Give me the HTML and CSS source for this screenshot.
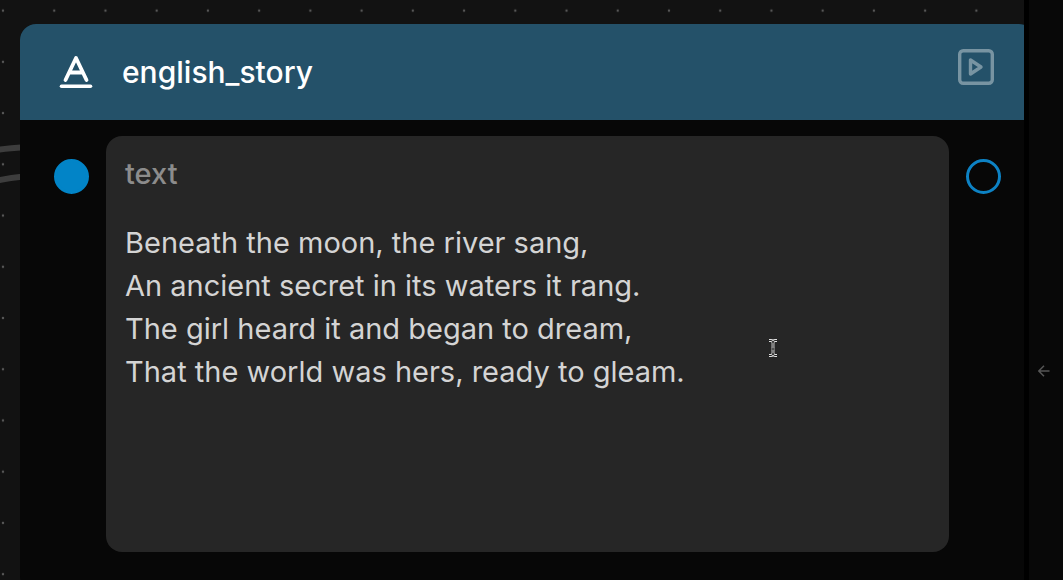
FILE: index.html
```html
<!DOCTYPE html>
<html lang="en">
<head>
<meta charset="utf-8">
<meta name="viewport" content="width=device-width, initial-scale=1">
<title>english_story</title>
<link rel="stylesheet" href="styles.css">
</head>
<body>
<div class="workspace">
  <main class="canvas">
    <svg class="canvas-grid" aria-hidden="true">
      <defs>
        <pattern id="dots" x="-22.6" y="-15" width="51.23" height="51.23" patternUnits="userSpaceOnUse">
          <circle cx="25.6" cy="25.6" r="1.2" fill="#585858"/>
        </pattern>
      </defs>
      <rect width="100%" height="100%" fill="url(#dots)"/>
      <path d="M-2 149.8Q9 148 24 147.2M-2 180.4Q9 178 24 176.5" fill="none" stroke="#3d3d3d" stroke-width="6"/>
    </svg>
    <article class="node">
      <header class="node-header">
        <svg class="type-icon" viewBox="0 0 34 34" aria-hidden="true">
          <path d="M6.500 25L17 3L27.500 25M10.200 17.500H23.800" fill="none" stroke="#fff" stroke-width="3.800" stroke-linecap="round" stroke-linejoin="round"/>
          <path d="M2.500 31.200H31.500" stroke="#fff" stroke-width="3.600" stroke-linecap="round"/>
        </svg>
        <h1 class="node-title">english_story</h1>
        <button class="run-button" type="button" aria-label="Run">
          <svg viewBox="0 0 36 36" aria-hidden="true">
            <rect x="1.700" y="1.700" width="32.600" height="32.600" rx="3.500"/>
            <path d="M12.500 11V25L23 18Z"/>
          </svg>
        </button>
      </header>
      <div class="node-body">
        <button class="port port-in" type="button" aria-label="Input"></button>
        <div class="field">
          <label class="field-label" for="story">text</label>
          <textarea class="field-text" id="story" spellcheck="false">Beneath the moon, the river sang,
An ancient secret in its waters it rang.
The girl heard it and began to dream,
That the world was hers, ready to gleam.</textarea>
        </div>
        <button class="port" type="button" aria-label="Output"></button>
      </div>
    </article>
    <svg class="pointer" viewBox="0 0 10 18" aria-hidden="true">
      <path d="M1 1.500H3Q5 1.500 5 4V14Q5 16.500 3 16.500H1M9 1.500H7Q5 1.500 5 4M9 16.500H7Q5 16.500 5 14M3.500 10H6.500" fill="none" stroke="#e0e0e0" stroke-width="2.800"/>
      <path d="M1 1.500H3Q5 1.500 5 4V14Q5 16.500 3 16.500H1M9 1.500H7Q5 1.500 5 4M9 16.500H7Q5 16.500 5 14M3.500 10H6.500" fill="none" stroke="#222" stroke-width="1"/>
    </svg>
  </main>
  <aside class="side-panel">
    <button class="expand-button" type="button" aria-label="Expand panel">
      <svg viewBox="0 0 12 12" aria-hidden="true"><path d="M11.500 6H1M6 .8L.8 6L6 11.200"/></svg>
    </button>
  </aside>
</div>
</body>
</html>
```
FILE: styles.css
```css
* {
  box-sizing: border-box;
}

body {
  margin: 0;
  background: #000;
  font-family: Inter, "Liberation Sans", sans-serif;
}

button {
  padding: 0;
  border: 0;
  background: none;
}

.workspace {
  display: flex;
  gap: 5px;
  height: 100vh;
  overflow: hidden;
}

.canvas {
  position: relative;
  flex: 1;
  min-width: 0;
  padding: 24px 0 0 20px;
  overflow: hidden;
  background: #121212;
}

.canvas-grid {
  position: absolute;
  inset: 0;
  width: 100%;
  height: 100%;
}

.node {
  position: relative;
  margin-right: -11px;
  border-radius: 16px;
  overflow: hidden;
  background: #070707;
}

.node-header {
  display: flex;
  align-items: center;
  height: 96px;
  padding: 0 41px 0 39px;
  background: #245169;
}

.type-icon {
  width: 34px;
  height: 34px;
  margin-right: 29px;
}

.node-title {
  flex: 1;
  margin: 0;
  color: #fff;
  font-size: 30px;
  font-weight: 500;
  line-height: 40px;
}

.run-button {
  width: 36px;
  height: 36px;
  margin-bottom: 11px;
}

.run-button svg {
  display: block;
  fill: none;
  stroke: #7894a2;
  stroke-width: 3.4;
  stroke-linejoin: round;
}

.node-body {
  display: flex;
  align-items: flex-start;
  gap: 17px;
  padding: 16px 34px 40px 34px;
}

.port {
  flex: none;
  width: 35px;
  height: 35px;
  margin-top: 23px;
  border: 3px solid #0d82c4;
  border-radius: 50%;
}

.port-in {
  background: #0284c7;
  border-color: #0284c7;
}

.field {
  display: flex;
  flex: 1;
  flex-direction: column;
  gap: 27px;
  min-width: 0;
  padding: 18px 19px;
  border-radius: 16px;
  background: #262626;
}

.field-label {
  color: #8c8c8c;
  font-size: 29px;
  font-weight: 500;
  line-height: 40px;
}

.field-text {
  display: block;
  width: 100%;
  height: 313px;
  padding: 0;
  border: 0;
  outline: 0;
  resize: none;
  overflow: hidden;
  background: none;
  color: #d4d4d4;
  font: 29px/43px Inter, "Liberation Sans", sans-serif;
}

.pointer {
  position: absolute;
  top: 339px;
  left: 768px;
  width: 10px;
  height: 18px;
}

.side-panel {
  display: flex;
  flex: none;
  width: 34px;
  align-items: flex-start;
  padding: 365px 0 0 9px;
  background: #080808;
}

.expand-button {
  width: 12px;
  height: 12px;
}

.expand-button svg {
  display: block;
  fill: none;
  stroke: #565656;
  stroke-width: 1.5;
}
```
